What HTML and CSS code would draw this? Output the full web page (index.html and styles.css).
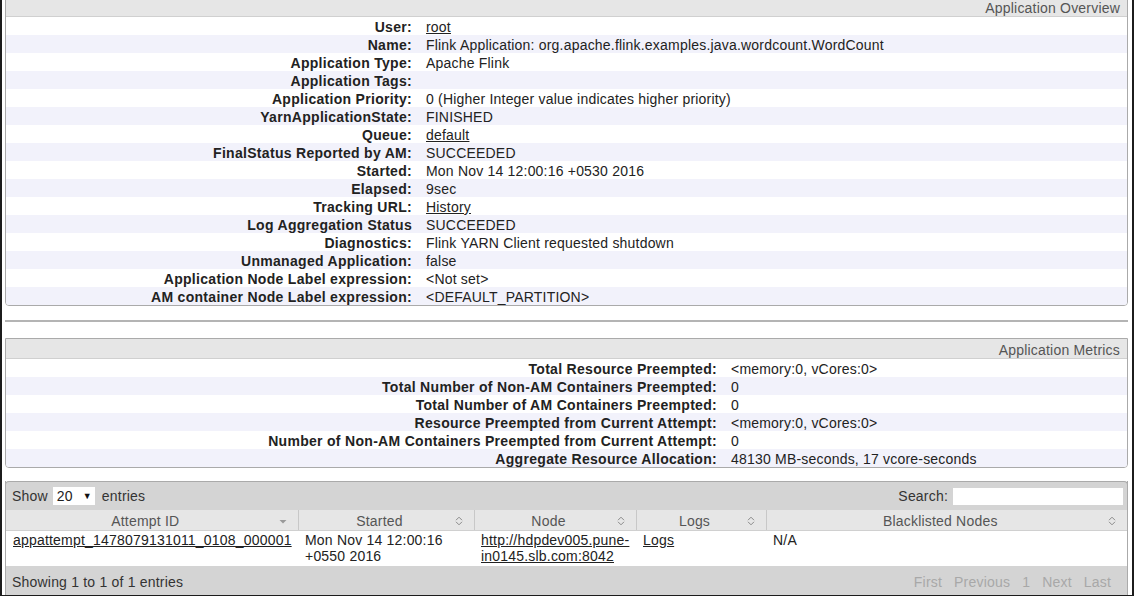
FILE: index.html
```html
<!DOCTYPE html>
<html>
<head>
<meta charset="utf-8">
<link rel="stylesheet" href="styles.css">
</head>
<body>
<div class="frame">
  <section class="panel panel-first">
    <div class="panel-head">Application Overview</div>
    <div class="info info-overview">
      <div class="row"><div class="lbl">User:</div><div class="val"><a href="#">root</a></div></div>
      <div class="row"><div class="lbl">Name:</div><div class="val">Flink Application: org.apache.flink.examples.java.wordcount.WordCount</div></div>
      <div class="row"><div class="lbl">Application Type:</div><div class="val">Apache Flink</div></div>
      <div class="row"><div class="lbl">Application Tags:</div><div class="val"></div></div>
      <div class="row"><div class="lbl">Application Priority:</div><div class="val">0 (Higher Integer value indicates higher priority)</div></div>
      <div class="row"><div class="lbl">YarnApplicationState:</div><div class="val">FINISHED</div></div>
      <div class="row"><div class="lbl">Queue:</div><div class="val"><a href="#">default</a></div></div>
      <div class="row"><div class="lbl">FinalStatus Reported by AM:</div><div class="val">SUCCEEDED</div></div>
      <div class="row"><div class="lbl">Started:</div><div class="val">Mon Nov 14 12:00:16 +0530 2016</div></div>
      <div class="row"><div class="lbl">Elapsed:</div><div class="val">9sec</div></div>
      <div class="row"><div class="lbl">Tracking URL:</div><div class="val"><a href="#">History</a></div></div>
      <div class="row"><div class="lbl">Log Aggregation Status</div><div class="val">SUCCEEDED</div></div>
      <div class="row"><div class="lbl">Diagnostics:</div><div class="val">Flink YARN Client requested shutdown</div></div>
      <div class="row"><div class="lbl">Unmanaged Application:</div><div class="val">false</div></div>
      <div class="row"><div class="lbl">Application Node Label expression:</div><div class="val">&lt;Not set&gt;</div></div>
      <div class="row"><div class="lbl">AM container Node Label expression:</div><div class="val">&lt;DEFAULT_PARTITION&gt;</div></div>
    </div>
  </section>

  <div class="rule"></div>

  <section class="panel">
    <div class="panel-head">Application Metrics</div>
    <div class="info info-metrics">
      <div class="row"><div class="lbl">Total Resource Preempted:</div><div class="val">&lt;memory:0, vCores:0&gt;</div></div>
      <div class="row"><div class="lbl">Total Number of Non-AM Containers Preempted:</div><div class="val">0</div></div>
      <div class="row"><div class="lbl">Total Number of AM Containers Preempted:</div><div class="val">0</div></div>
      <div class="row"><div class="lbl">Resource Preempted from Current Attempt:</div><div class="val">&lt;memory:0, vCores:0&gt;</div></div>
      <div class="row"><div class="lbl">Number of Non-AM Containers Preempted from Current Attempt:</div><div class="val">0</div></div>
      <div class="row"><div class="lbl">Aggregate Resource Allocation:</div><div class="val">48130 MB-seconds, 17 vcore-seconds</div></div>
    </div>
  </section>

  <section class="dt">
    <div class="dt-toolbar dt-top">
      <div class="dt-length">Show <span class="select"><span>20</span><span class="caret">&#9660;</span></span> entries</div>
      <div class="dt-search">Search: <input class="search-input" type="text"></div>
    </div>
    <table class="grid">
      <colgroup>
        <col class="c1"><col class="c2"><col class="c3"><col class="c4"><col class="c5">
      </colgroup>
      <thead>
        <tr>
          <th>Attempt ID<svg class="sort" width="8" height="10" viewBox="0 0 8 10"><path d="M0.5 4 L7.5 4 L4 7.5 Z" fill="#9a9a9a"/></svg></th>
          <th>Started<svg class="sort" width="8" height="10" viewBox="0 0 8 10"><path d="M1 4.2 L4 1.2 L7 4.2 M1 5.8 L4 8.8 L7 5.8" fill="none" stroke="#8a8a8a" stroke-width="1"/></svg></th>
          <th>Node<svg class="sort" width="8" height="10" viewBox="0 0 8 10"><path d="M1 4.2 L4 1.2 L7 4.2 M1 5.8 L4 8.8 L7 5.8" fill="none" stroke="#8a8a8a" stroke-width="1"/></svg></th>
          <th>Logs<svg class="sort" width="8" height="10" viewBox="0 0 8 10"><path d="M1 4.2 L4 1.2 L7 4.2 M1 5.8 L4 8.8 L7 5.8" fill="none" stroke="#8a8a8a" stroke-width="1"/></svg></th>
          <th class="last">Blacklisted Nodes<svg class="sort" width="8" height="10" viewBox="0 0 8 10"><path d="M1 4.2 L4 1.2 L7 4.2 M1 5.8 L4 8.8 L7 5.8" fill="none" stroke="#8a8a8a" stroke-width="1"/></svg></th>
        </tr>
      </thead>
      <tbody>
        <tr>
          <td><a href="#">appattempt_1478079131011_0108_000001</a></td>
          <td>Mon Nov 14 12:00:16 +0550 2016</td>
          <td><a href="#">http://hdpdev005.pune-in0145.slb.com:8042</a></td>
          <td><a href="#">Logs</a></td>
          <td>N/A</td>
        </tr>
      </tbody>
    </table>
    <div class="dt-toolbar dt-bottom">
      <div class="dt-info">Showing 1 to 1 of 1 entries</div>
      <div class="dt-pager"><span>First</span><span>Previous</span><span>1</span><span>Next</span><span>Last</span></div>
    </div>
  </section>
</div>
</body>
</html>
```

FILE: styles.css
```css
* { box-sizing: border-box; }
html, body { margin: 0; padding: 0; background: #fff; }
body {
  font-family: "Liberation Sans", Arial, sans-serif;
  font-size: 14px;
  letter-spacing: 0.2px;
  color: #222;
}
a { color: #222; text-decoration: underline; }

.frame {
  height: 596px;
  overflow: hidden;
  border-left: 2px solid #1c1c1c;
  border-right: 2px solid #1c1c1c;
  border-bottom: 1px solid #1c1c1c;
  padding: 0 4px 0 3px;
}

.panel {
  border: 1px solid #aaa;
  border-radius: 0 0 4px 4px;
  overflow: hidden;
}
.panel-first { margin-top: -4px; }
.panel-head {
  height: 20px;
  background: #e6e6e6;
  border-bottom: 1px solid #d0d0d0;
  color: #555;
  text-align: right;
  padding: 3px 7px 0 0;
  line-height: 16px;
}

.info .row {
  display: grid;
  height: 18px;
  padding-top: 2px;
  line-height: 16px;
}
.info .row:nth-child(even) { background: #f2f2fb; }
.info-overview .row { grid-template-columns: 413px 1fr; }
.info-metrics .row { grid-template-columns: 718px 1fr; }
.lbl {
  font-weight: bold;
  letter-spacing: 0.3px;
  text-align: right;
  padding-right: 7px;
  white-space: nowrap;
}
.val { padding-left: 7px; white-space: nowrap; }

.rule {
  height: 2px;
  background: #b4b4b4;
  margin: 14px 0 16px;
}

.dt {
  margin-top: 13px;
  border-left: 1px solid #aaa;
  border-right: 1px solid #aaa;
}
.dt-toolbar {
  display: flex;
  justify-content: space-between;
  align-items: center;
  background: #d4d4d4;
  color: #333;
}
.dt-top {
  height: 29px;
  border-top: 1px solid #aaa;
  border-radius: 4px 4px 0 0;
  padding: 0 4px 0 6px;
  margin: 0 -1px;
  border-left: 1px solid #aaa;
  border-right: 1px solid #aaa;
}
.dt-bottom {
  height: 30px;
  padding: 2px 16px 0 6px;
}
.dt-length { display: flex; align-items: center; }
.select {
  display: inline-flex;
  align-items: center;
  width: 42px;
  height: 18px;
  background: #fff;
  margin: 0 7px 0 5px;
  padding-left: 4px;
  color: #222;
}
.select .caret { font-size: 9px; margin-left: 10px; color: #111; }
.dt-search { display: flex; align-items: center; }
.search-input {
  width: 170px;
  height: 17px;
  border: none;
  background: #fff;
  margin-left: 5px;
  padding: 0;
}
.dt-pager { display: flex; gap: 12px; color: #a8a8a8; }

.grid {
  width: 100%;
  border-collapse: collapse;
  table-layout: fixed;
}
.grid col.c1 { width: 292px; }
.grid col.c2 { width: 176px; }
.grid col.c3 { width: 162px; }
.grid col.c4 { width: 130px; }
.grid col.c5 { width: 361px; }
.grid th {
  position: relative;
  height: 20px;
  background: #e6e6e6;
  color: #555;
  font-weight: normal;
  text-align: center;
  line-height: 16px;
  padding: 2px 20px 0 7px;
  border-right: 1px solid #c8c8c8;
  border-bottom: 1px solid #d0d0d0;
  white-space: nowrap;
}
.grid th.last { border-right: none; }
.grid th .sort {
  position: absolute;
  right: 11px;
  top: 6px;
}
.grid td {
  vertical-align: top;
  line-height: 16px;
  padding: 1px 1px 2px 7px;
  height: 35px;
  background: #fff;
}
```
